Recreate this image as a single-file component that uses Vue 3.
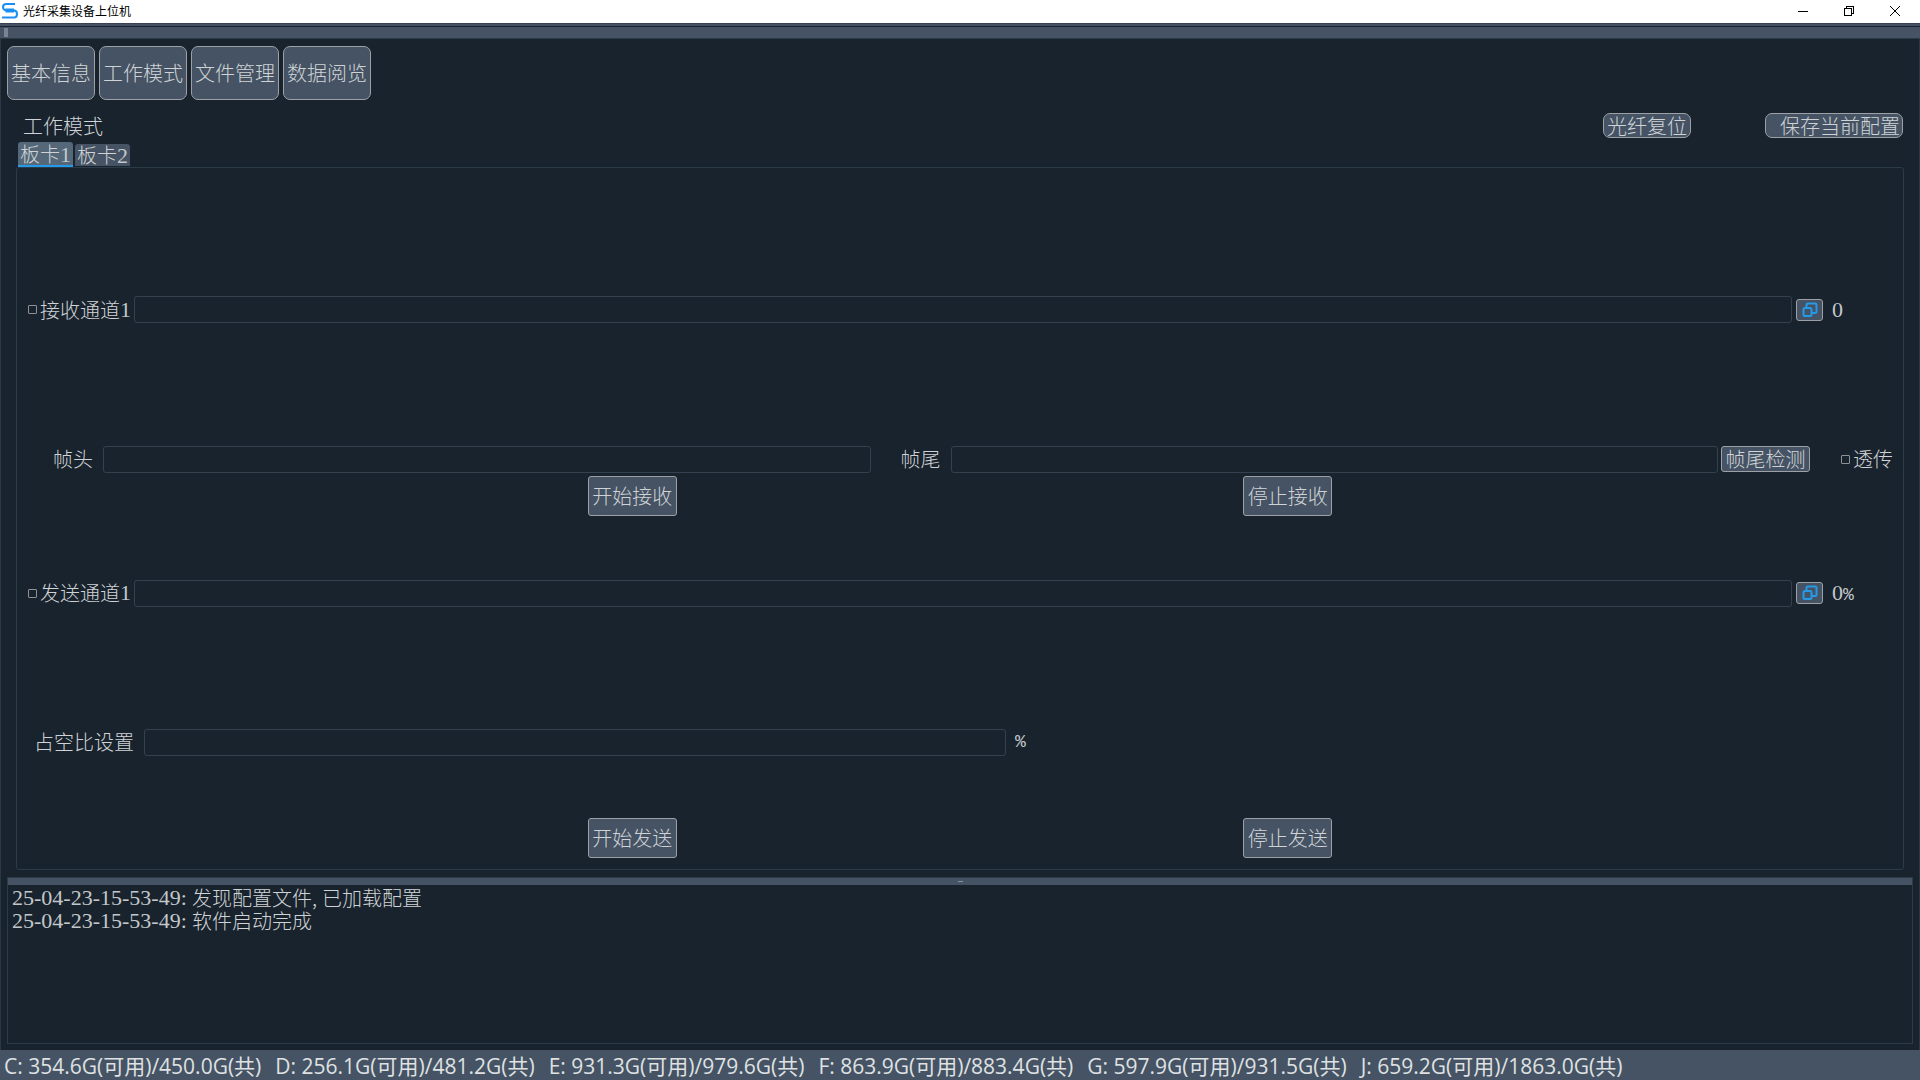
<script setup>
import { ref } from 'vue'

const pages = ['基本信息', '工作模式', '文件管理', '数据阅览']
const boards = [
  { name: '板卡', index: 1 },
  { name: '板卡', index: 2 }
]
const activeBoard = ref(1)
const receiveOn = ref(false)
const sendOn = ref(false)
const passThrough = ref(false)
const receivePath = ref('')
const sendPath = ref('')
const frameHead = ref('')
const frameTail = ref('')
const duty = ref('')

const logs = [
  { time: '25-04-23-15-53-49:', parts: ['发现配置文件', '已加载配置'] },
  { time: '25-04-23-15-53-49:', parts: ['软件启动完成'] }
]
const disks = [
  { name: 'C', free: '354.6G', total: '450.0G' },
  { name: 'D', free: '256.1G', total: '481.2G' },
  { name: 'E', free: '931.3G', total: '979.6G' },
  { name: 'F', free: '863.9G', total: '883.4G' },
  { name: 'G', free: '597.9G', total: '931.5G' },
  { name: 'J', free: '659.2G', total: '1863.0G' }
]
</script>

<template>
  <div class="window">
    <header class="titlebar">
      <svg class="logo" width="18" height="18" viewBox="0 0 18 18" fill="none" stroke="#1890f5" stroke-width="2">
        <path d="M14 2H5.500Q2 2 2 5T5.500 8.500H13Q16 8.500 16 12T13 15.500H1" />
        <path d="M4.500 8.500H13" stroke-width="4" />
      </svg>
      <h1>光纤采集设备上位机</h1>
      <div class="controls">
        <button type="button" aria-label="最小化">
          <svg width="12" height="12" viewBox="0 0 12 12" shape-rendering="crispEdges"><path d="M1 6.500H11" stroke="#000" /></svg>
        </button>
        <button type="button" aria-label="还原">
          <svg width="12" height="12" viewBox="0 0 12 12" fill="none" stroke="#000" shape-rendering="crispEdges"><path d="M1.500 3.500H8.500V10.500H1.500ZM3.500 3.500V1.500H10.500V8.500H8.500" /></svg>
        </button>
        <button type="button" aria-label="关闭">
          <svg width="12" height="12" viewBox="0 0 12 12" stroke="#000"><path d="M1 1L11 11M11 1L1 11" /></svg>
        </button>
      </div>
    </header>
    <div class="menu-strip"></div>
    <div class="toolbar"><span class="grip"></span></div>

    <main class="body">
      <nav class="pages">
        <button v-for="p in pages" :key="p" type="button" class="btn page-btn">{{ p }}</button>
      </nav>

      <section class="mode">
        <div class="mode-head">
          <h2>工作模式</h2>
          <button type="button" class="btn round">光纤复位</button>
          <button type="button" class="btn round save">保存当前配置</button>
        </div>
        <div class="tabs" role="tablist">
          <button
            v-for="b in boards"
            :key="b.index"
            type="button"
            role="tab"
            class="tab"
            :class="{ active: b.index === activeBoard }"
            :aria-selected="b.index === activeBoard"
            @click="activeBoard = b.index"
          >{{ b.name }}<span class="num">{{ b.index }}</span></button>
        </div>

        <div class="pane" role="tabpanel">
          <div class="row receive">
            <label class="check"><input v-model="receiveOn" type="checkbox" />接收通道<span class="num">1</span></label>
            <input v-model="receivePath" class="field" type="text" aria-label="接收文件路径" />
            <button type="button" class="btn pick" aria-label="选择接收文件">
              <svg width="16" height="16" viewBox="0 0 16 16" fill="none" stroke="#259ae9" stroke-width="2">
                <rect x="1.500" y="6" width="8" height="8" rx="1.500" />
                <path d="M4.500 6V3Q4.500 1.500 6 1.500H13Q14.500 1.500 14.500 3V9.500Q14.500 11 13 11H9.500" />
              </svg>
            </button>
            <output class="value num">0</output>
          </div>

          <div class="row frame">
            <label for="frame-head">帧头</label>
            <input id="frame-head" v-model="frameHead" class="field" type="text" />
            <label for="frame-tail" class="tail-label">帧尾</label>
            <input id="frame-tail" v-model="frameTail" class="field" type="text" />
            <button type="button" class="btn detect">帧尾检测</button>
            <label class="check pass"><input v-model="passThrough" type="checkbox" />透传</label>
          </div>

          <div class="actions receive-actions">
            <button type="button" class="btn action">开始接收</button>
            <button type="button" class="btn action">停止接收</button>
          </div>

          <div class="row send">
            <label class="check"><input v-model="sendOn" type="checkbox" />发送通道<span class="num">1</span></label>
            <input v-model="sendPath" class="field" type="text" aria-label="发送文件路径" />
            <button type="button" class="btn pick" aria-label="选择发送文件">
              <svg width="16" height="16" viewBox="0 0 16 16" fill="none" stroke="#259ae9" stroke-width="2">
                <rect x="1.500" y="6" width="8" height="8" rx="1.500" />
                <path d="M4.500 6V3Q4.500 1.500 6 1.500H13Q14.500 1.500 14.500 3V9.500Q14.500 11 13 11H9.500" />
              </svg>
            </button>
            <output class="value"><span class="num">0</span><span class="percent">%</span></output>
          </div>

          <div class="row duty">
            <label for="duty">占空比设置</label>
            <input id="duty" v-model="duty" class="field" type="text" />
            <span class="unit percent">%</span>
          </div>

          <div class="actions send-actions">
            <button type="button" class="btn action">开始发送</button>
            <button type="button" class="btn action">停止发送</button>
          </div>
        </div>
      </section>

      <section class="log">
        <div class="splitter"><span></span></div>
        <p v-for="(l, i) in logs" :key="i">
          <span class="num time">{{ l.time }}</span><template v-for="(part, n) in l.parts" :key="n"><span v-if="n" class="comma">,</span>{{ part }}</template>
        </p>
      </section>
    </main>

    <footer class="status">
      <span v-for="d in disks" :key="d.name">{{ d.name }}: {{ d.free }}(可用)/{{ d.total }}(共)</span>
    </footer>
  </div>
</template>

<style>
body {
  margin: 0;
  background: #19232d;
}
</style>

<style scoped>
* {
  box-sizing: border-box;
}
.window {
  display: flex;
  flex-direction: column;
  min-height: 100vh;
  background: #19232d;
  color: #d0d3d6;
  font: 300 20px/24px "Noto Sans CJK SC", sans-serif;
}
button,
input {
  font: inherit;
  color: inherit;
}
h1,
h2,
p {
  margin: 0;
  font-weight: inherit;
}
.titlebar {
  display: flex;
  align-items: center;
  height: 23px;
  padding-bottom: 2px;
  background: #fff;
  color: #000;
}
.logo {
  margin: 0 4px 0 1px;
}
.titlebar h1 {
  flex: 1;
  font-size: 12px;
  font-weight: 400;
  line-height: 20px;
}
.controls {
  display: flex;
  margin-right: 2px;
}
.controls button {
  display: flex;
  align-items: center;
  justify-content: center;
  width: 46px;
  height: 20px;
  padding: 0;
  border: 0;
  background: none;
}
.menu-strip {
  height: 4px;
  background: #455364;
  border-top: 1px solid #37414f;
  border-bottom: 1px solid #19232d;
}
.toolbar {
  display: flex;
  height: 12px;
  padding: 1px 4px;
  background: #455364;
  border-bottom: 1px solid #2c3b48;
}
.grip {
  width: 4px;
  background: #788490;
}
.body {
  flex: 1;
  display: flex;
  flex-direction: column;
  padding: 7px 6px 6px;
  border: solid #2b3744;
  border-width: 0 1px;
}
.btn {
  display: flex;
  align-items: center;
  justify-content: center;
  padding: 0;
  background: #455364;
  border: 1px solid #9da1a5;
  border-radius: 3px;
  white-space: nowrap;
}
.pages {
  display: flex;
  gap: 4px;
}
.page-btn {
  width: 88px;
  height: 54px;
  border-radius: 7px;
}
.mode {
  flex: 1;
  display: flex;
  flex-direction: column;
  padding: 13px 9px 7px;
}
.mode-head {
  display: flex;
  align-items: center;
  height: 25px;
  gap: 74px;
  padding-right: 1px;
}
.mode-head h2 {
  flex: 1;
  padding-left: 7px;
  font-size: 20px;
}
.round {
  width: 88px;
  height: 25px;
  border-radius: 7px;
}
.save {
  width: 138px;
  padding-left: 12px;
}
.tabs {
  display: flex;
  align-items: flex-start;
  height: 29px;
  gap: 2px;
  padding: 4px 0 0 2px;
}
.tab {
  width: 55px;
  height: 22px;
  margin-top: 2px;
  padding: 0;
  border: 0;
  border-radius: 3px 3px 0 0;
  background: #455364;
  line-height: 22px;
  white-space: nowrap;
}
.tab.active {
  height: 25px;
  margin-top: 0;
  background: #54687a;
  border-bottom: 2px solid #259ae9;
}
.num {
  color: #c3c7ca;
  font-family: "Liberation Serif", serif;
  font-size: 22px;
  font-weight: 400;
  line-height: 20px;
}
.percent {
  color: #c3c7ca;
  font-family: "Liberation Mono", monospace;
  font-size: 18px;
  font-weight: 400;
}
.pane {
  flex: 1;
  display: grid;
  grid-template-rows: 128fr 27px 122fr 27px 3px 40px 64fr 27px 122fr 27px 62fr 40px 11px;
  border: 1px solid #2c3b48;
  border-radius: 3px;
}
.row {
  display: flex;
  align-items: center;
  padding: 0 10px 0 11px;
}
.receive {
  grid-row: 2;
}
.frame {
  grid-row: 4;
  padding-left: 36px;
}
.receive-actions {
  grid-row: 6;
}
.send {
  grid-row: 8;
}
.duty {
  grid-row: 10;
  padding: 0 36px 0 17px;
}
.send-actions {
  grid-row: 12;
}
.row label {
  white-space: nowrap;
}
.field {
  flex: 1;
  min-width: 0;
  height: 27px;
  margin: 0 0 0 10px;
  padding: 0 4px;
  background: transparent;
  border: 1px solid #33414f;
  border-radius: 3px;
  outline: 0;
}
.check {
  display: flex;
  align-items: center;
}
.check input {
  appearance: none;
  width: 9px;
  height: 9px;
  margin: 0 3px 0 0;
  border: 1px solid #8b9196;
  border-radius: 1px;
}
.check + .field {
  margin-left: 3px;
}
.pick {
  width: 27px;
  height: 22px;
  margin-left: 4px;
}
.value {
  width: 70px;
  padding-left: 9px;
}
.tail-label {
  margin-left: 30px;
}
.detect {
  width: 89px;
  height: 26px;
  margin-left: 3px;
}
.pass {
  margin-left: 31px;
}
.unit {
  flex: 1;
  margin-left: 9px;
}
.actions {
  display: flex;
  justify-content: space-evenly;
  padding: 0 4px;
}
.action {
  width: 89px;
  height: 40px;
}
.log {
  height: 167px;
  border: 1px solid #2c3b48;
}
.splitter {
  display: flex;
  align-items: center;
  justify-content: center;
  height: 7px;
  margin-bottom: 1px;
  background: #455364;
}
.splitter span {
  width: 5px;
  height: 1px;
  background: #8b9196;
}
.log p {
  display: flex;
  height: 23px;
  padding-left: 4px;
  line-height: 23px;
  white-space: nowrap;
}
.log .time {
  width: 180px;
  line-height: 23px;
}
.comma {
  width: 10px;
}
.status {
  display: flex;
  align-items: center;
  gap: 14px;
  height: 30px;
  padding: 2px 0 0 4px;
  background: #455364;
  color: #dfe1e2;
  font-family: "Open Sans", "Noto Sans CJK SC", sans-serif;
  font-size: 21px;
  font-weight: 400;
  white-space: nowrap;
}
</style>
